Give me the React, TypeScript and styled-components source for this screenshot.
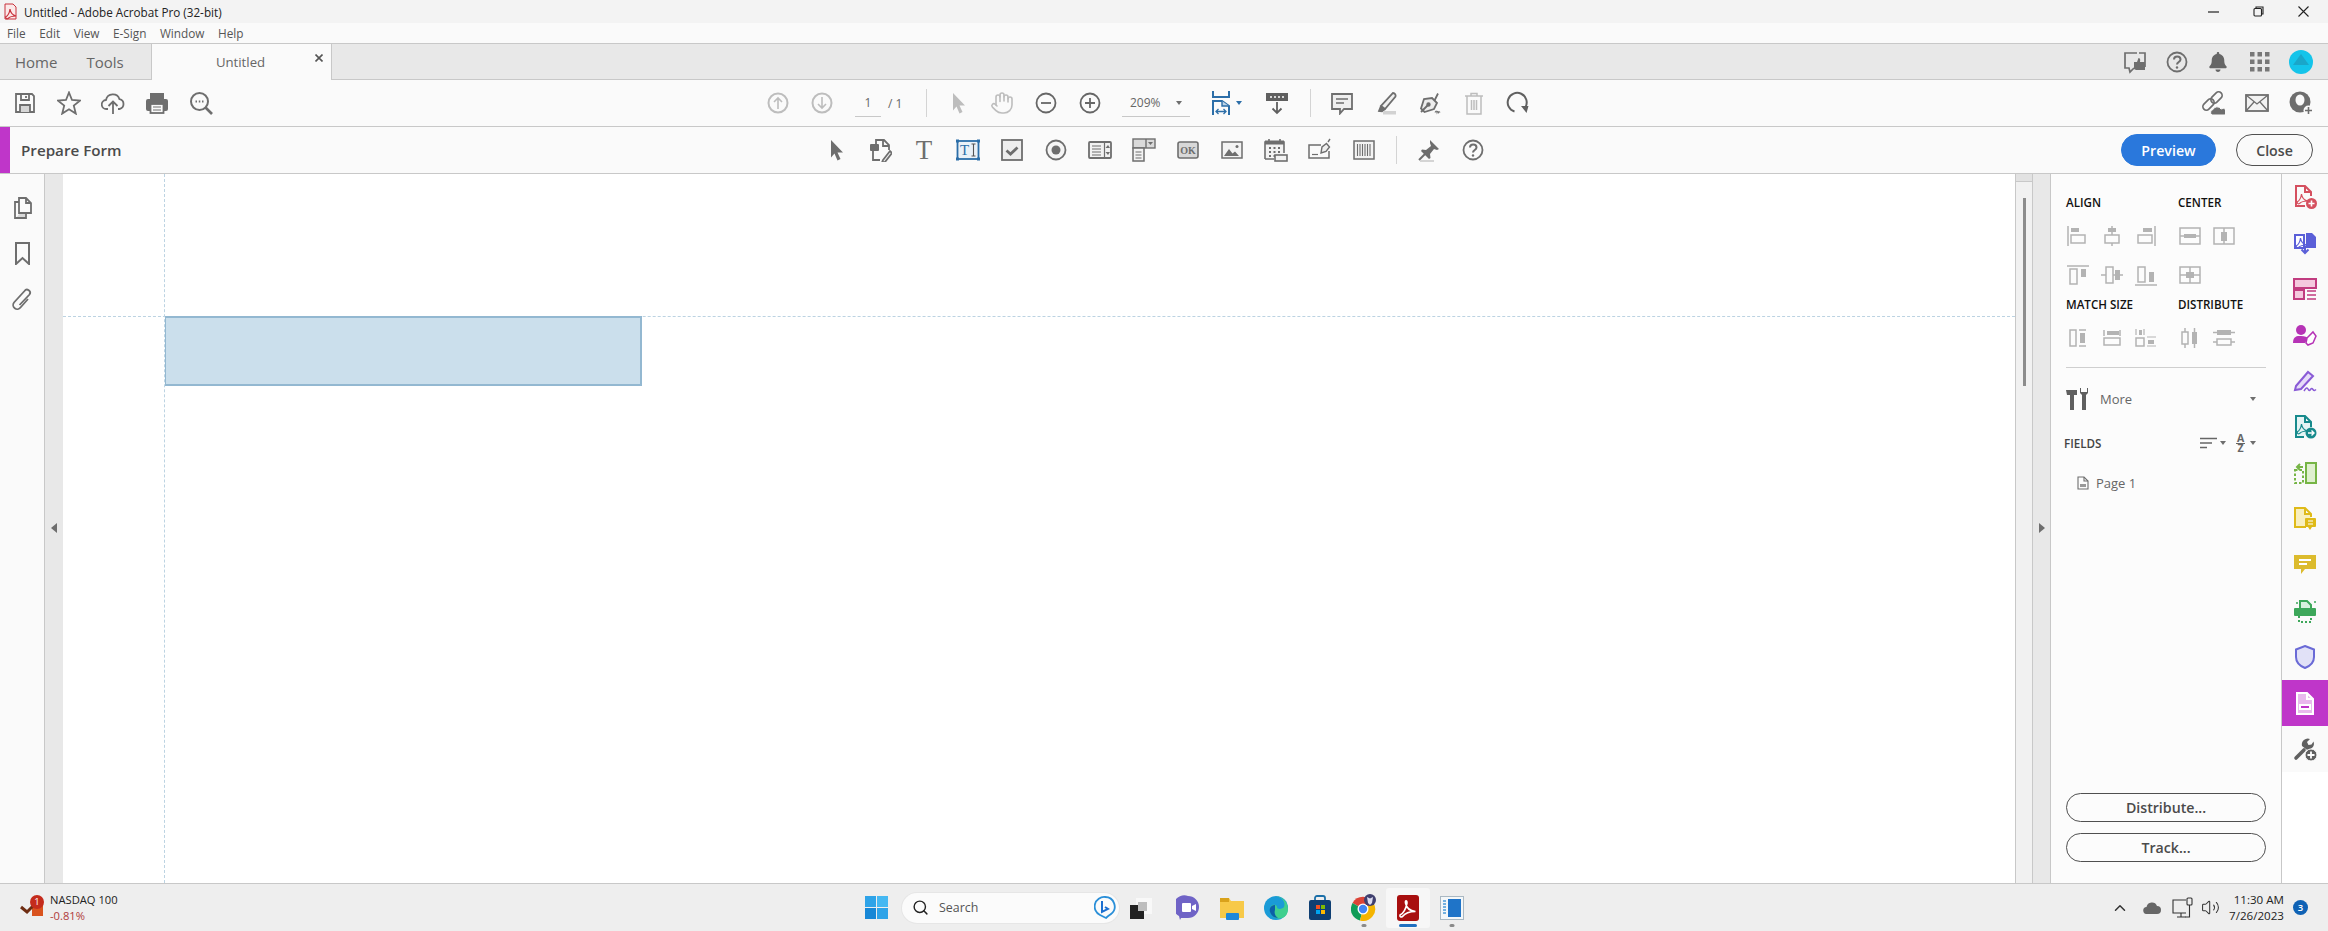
import React, { FC, ReactNode } from 'react';
import styled, { createGlobalStyle } from 'styled-components';
import { LuHand, LuSearch, LuChevronUp, LuVolume2 } from 'react-icons/lu';
import { FaBell } from 'react-icons/fa';

const GlobalStyle = createGlobalStyle`
  html, body, #root { margin: 0; height: 100%; }
  body { overflow: hidden; background: #fff; font-family: "Open Sans", "Noto Sans", sans-serif; color: #444; }
  * { box-sizing: border-box; }
`;

const Shell = styled.div`
  display: flex;
  flex-direction: column;
  width: 2328px;
  height: 931px;
`;

/* ---------- window chrome ---------- */
const TitleBar = styled.div`
  display: flex;
  align-items: center;
  height: 23px;
  background: #f3f3f3;
  padding-left: 4px;
  font-size: 11.7px;
  color: #222;
`;
const TitleText = styled.span`
  margin-left: 7px;
`;
const WinControls = styled.div`
  display: flex;
  margin-left: auto;
  margin-right: 2px;
`;
const WinControl = styled.div`
  display: flex;
  justify-content: center;
  align-items: center;
  width: 45px;
  height: 20px;
`;
const MenuBar = styled.div`
  display: flex;
  align-items: center;
  height: 21px;
  padding: 0 0 1px 7px;
  gap: 13.5px;
  background: #fafafa;
  border-bottom: 1px solid #c8c8c8;
  font-size: 11.8px;
  color: #555;
`;
const TabBar = styled.div`
  display: flex;
  height: 36px;
  background: #e8e8e8;
  border-bottom: 1px solid #c8c8c8;
`;
const NavTabs = styled.div`
  display: flex;
  align-items: center;
  width: 151px;
  padding-left: 15px;
  gap: 29px;
  font-size: 15px;
  color: #666;
`;
const DocTab = styled.div`
  position: relative;
  display: flex;
  justify-content: center;
  align-items: center;
  width: 181px;
  height: 36px;
  padding-right: 2px;
  background: #fafafa;
  border-left: 1px solid #c8c8c8;
  border-right: 1px solid #c8c8c8;
  font-size: 13.2px;
  color: #666;
`;
const TabClose = styled.span`
  position: absolute;
  right: 8px;
  top: 10px;
  display: flex;
`;
const TabIcons = styled.div`
  display: flex;
  align-items: center;
  margin-left: auto;
  padding-right: 6px;
`;
const Slot = styled.div<{ $w?: number; $end?: boolean }>`
  display: flex;
  flex: 0 0 auto;
  justify-content: ${(p) => (p.$end ? 'flex-end' : 'center')};
  align-items: center;
  width: ${(p) => p.$w ?? 44}px;
  height: 100%;
`;
const Toolbar = styled.div`
  display: flex;
  align-items: center;
  height: 47px;
  background: #fafafa;
  border-bottom: 1px solid #c8c8c8;
`;
const ToolGroup = styled.div<{ $ml?: number; $pl?: number; $pr?: number; $push?: boolean }>`
  display: flex;
  align-items: center;
  height: 100%;
  margin-left: ${(p) => (p.$push ? 'auto' : `${p.$ml ?? 0}px`)};
  padding-left: ${(p) => p.$pl ?? 0}px;
  padding-right: ${(p) => p.$pr ?? 0}px;
`;
const PageBox = styled.div`
  display: flex;
  justify-content: center;
  align-items: center;
  width: 26px;
  height: 28px;
  margin: 0 7px 0 11px;
  border-bottom: 1px solid #c8c8c8;
  font-size: 12px;
  color: #666;
`;
const PageTotal = styled.span`
  width: 38px;
  font-size: 12px;
  color: #666;
`;
const Sep = styled.div<{ $mr?: number; $ml?: number }>`
  width: 1px;
  height: 28px;
  margin-left: ${(p) => p.$ml ?? 0}px;
  margin-right: ${(p) => p.$mr ?? 0}px;
  background: #d4d4d4;
`;
const ZoomBox = styled.div`
  display: flex;
  align-items: center;
  justify-content: space-between;
  width: 68px;
  height: 28px;
  margin-left: 10px;
  padding: 0 8px;
  border-bottom: 1px solid #c8c8c8;
  font-size: 12px;
  color: #666;
`;
const Caret = styled.span<{ $c?: string; $ml?: number }>`
  display: inline-block;
  flex: 0 0 auto;
  width: 0;
  height: 0;
  margin-left: ${(p) => p.$ml ?? 0}px;
  border-left: 3.5px solid transparent;
  border-right: 3.5px solid transparent;
  border-top: 4px solid ${(p) => p.$c ?? '#6e6e6e'};
`;
const FormAccent = styled.div`
  width: 10px;
  height: 100%;
  background: #bf36c9;
`;
const FormTitle = styled.div`
  flex: 0 0 804px;
  padding-left: 11px;
  font-size: 15.2px;
  font-weight: 600;
  color: #4b4b4b;
`;
const FormActions = styled.div`
  display: flex;
  gap: 20px;
  margin-left: auto;
  padding-right: 15px;
`;
const PillButton = styled.div<{ $primary?: boolean; $w: number; $h?: number }>`
  display: flex;
  justify-content: center;
  align-items: center;
  width: ${(p) => p.$w}px;
  height: ${(p) => p.$h ?? 32}px;
  border-radius: 17px;
  border: 1px solid ${(p) => (p.$primary ? '#2a78dc' : '#505050')};
  background: ${(p) => (p.$primary ? '#2a78dc' : 'transparent')};
  color: ${(p) => (p.$primary ? '#fff' : '#4b4b4b')};
  font-size: 14.2px;
  font-weight: 600;
`;

/* ---------- workspace ---------- */
const Workspace = styled.div`
  display: flex;
  flex: 1;
  min-height: 0;
`;
const LeftRail = styled.div`
  display: flex;
  flex-direction: column;
  align-items: center;
  width: 45px;
  padding: 21px 1px 0 0;
  gap: 22px;
  background: #fafafa;
  border-right: 1px solid #c8c8c8;
`;
const Gutter = styled.div<{ $border?: boolean }>`
  display: flex;
  justify-content: center;
  align-items: center;
  width: 18px;
  padding-bottom: 1px;
  background: #e8e8e8;
  border-right: ${(p) => (p.$border ? '1px solid #c8c8c8' : 'none')};
`;
const SideArrow = styled.span<{ $left?: boolean }>`
  width: 0;
  height: 0;
  border-top: 5px solid transparent;
  border-bottom: 5px solid transparent;
  ${(p) => (p.$left ? 'border-right: 6px solid #6e6e6e;' : 'border-left: 6px solid #6e6e6e;')}
`;
const PageCanvas = styled.div`
  position: relative;
  flex: 1;
  background: #fff;
  overflow: hidden;
`;
const GuideV = styled.div`
  position: absolute;
  left: 101px;
  top: 0;
  bottom: 0;
  border-left: 1px dashed #bcd3e2;
`;
const GuideH = styled.div`
  position: absolute;
  left: 0;
  right: 0;
  top: 142px;
  border-top: 1px dashed #bcd3e2;
`;
const TextField = styled.div`
  position: absolute;
  left: 102px;
  top: 142px;
  width: 477px;
  height: 70px;
  background: #cbdfec;
  border: 2px solid #93b8d1;
  border-left-width: 1px;
`;
const ScrollTrack = styled.div`
  display: flex;
  flex-direction: column;
  align-items: center;
  width: 18px;
  background: #f1f1f1;
  border-left: 1px solid #c8c8c8;
  border-right: 1px solid #c8c8c8;
`;
const ScrollCap = styled.div`
  width: 100%;
  height: 8px;
  background: #e2e2e2;
  border-bottom: 1px solid #c8c8c8;
`;
const ScrollThumb = styled.div`
  width: 3px;
  height: 188px;
  margin-top: 16px;
  background: #8c8c8c;
`;
const RightPane = styled.div`
  display: flex;
  flex-direction: column;
  width: 231px;
  padding: 19px 15px 21px 10px;
  background: #fcfcfc;
  border-right: 1px solid #c8c8c8;
`;
const AlignGrid = styled.div`
  display: grid;
  grid-template-columns: 34px 34px 34px 10px 34px 34px;
  grid-template-rows: 20px 48px 30px 28px 40px;
  justify-items: center;
  align-items: center;
`;
const GroupLabel = styled.div<{ $col: number; $row: number }>`
  grid-column: ${(p) => p.$col} / span 3;
  grid-row: ${(p) => p.$row};
  justify-self: start;
  margin-top: -2px;
  margin-left: ${(p) => (p.$col === 1 ? 5 : 15)}px;
  font-size: 11.6px;
  font-weight: 600;
  white-space: nowrap;
  color: #111;
`;
const AlignCell = styled.div<{ $col: number; $row: number }>`
  display: flex;
  grid-column: ${(p) => p.$col};
  grid-row: ${(p) => p.$row};
`;
const PaneDivider = styled.div`
  height: 1px;
  margin: 8px 0 0 5px;
  background: #cfcfcf;
`;
const MoreRow = styled.div`
  display: flex;
  align-items: center;
  height: 62px;
  padding: 0 10px 0 5px;
  font-size: 13px;
  color: #666;
`;
const MoreLabel = styled.span`
  flex: 1;
  margin-left: 10px;
`;
const FieldsRow = styled.div`
  display: flex;
  align-items: center;
  height: 26px;
  padding: 0 10px 0 3px;
  font-size: 11.6px;
  font-weight: 600;
  color: #444;
`;
const SortControls = styled.div`
  display: flex;
  align-items: center;
  gap: 3px;
  margin-left: auto;
`;
const PageRow = styled.div`
  display: flex;
  align-items: center;
  gap: 7px;
  height: 54px;
  padding-left: 16px;
  font-size: 13px;
  color: #666;
`;
const PaneButtons = styled.div`
  display: flex;
  flex-direction: column;
  gap: 11px;
  margin-top: auto;
  padding-left: 5px;
`;
const ToolRail = styled.div`
  display: flex;
  flex-direction: column;
  width: 46px;
  background: #fff;
`;
const RailItem = styled.div<{ $active?: boolean }>`
  display: flex;
  flex: 0 0 46px;
  justify-content: center;
  align-items: center;
  background: ${(p) => (p.$active ? '#bf36c9' : '#fafafa')};
`;

/* ---------- taskbar ---------- */
const Taskbar = styled.div`
  display: flex;
  align-items: center;
  height: 48px;
  background: #eeeeee;
  border-top: 1px solid #c8c8c8;
`;
const Widget = styled.div`
  display: flex;
  align-items: center;
  flex: 0 0 865px;
  padding-left: 20px;
  gap: 6px;
`;
const WidgetIcon = styled.div`
  position: relative;
  display: flex;
`;
const WidgetBadge = styled.span`
  position: absolute;
  left: 10px;
  top: -3px;
  display: flex;
  justify-content: center;
  align-items: center;
  width: 14px;
  height: 14px;
  border-radius: 50%;
  background: #c42b1c;
  color: #fff;
  font-size: 9.5px;
`;
const WidgetText = styled.div`
  display: flex;
  flex-direction: column;
  font-size: 11.2px;
  line-height: 16px;
  color: #222;
`;
const WidgetDelta = styled.span`
  color: #b03a3a;
`;
const SearchPill = styled.div`
  display: flex;
  align-items: center;
  width: 217px;
  height: 30px;
  margin-left: 14px;
  padding: 0 3px 0 10px;
  gap: 10px;
  border-radius: 15px;
  background: #fbfbfb;
  box-shadow: 0 0 0 1px #e6e6e6;
  font-size: 12.4px;
  color: #555;
`;
const SearchEnd = styled.span`
  display: flex;
  margin-left: auto;
`;
const TaskItem = styled.div<{ $active?: boolean; $dot?: boolean; $mr?: number }>`
  position: relative;
  display: flex;
  flex: 0 0 44px;
  justify-content: center;
  align-items: center;
  height: 40px;
  margin-right: ${(p) => p.$mr ?? 0}px;
  border-radius: 3px;
  background: ${(p) => (p.$active ? '#f7f7f7' : 'transparent')};
  &::after {
    content: '';
    display: ${(p) => (p.$active || p.$dot ? 'block' : 'none')};
    position: absolute;
    bottom: 1px;
    left: 50%;
    transform: translateX(-50%);
    width: ${(p) => (p.$active ? 18 : 5)}px;
    height: 3px;
    border-radius: 2px;
    background: ${(p) => (p.$active ? '#1f6fc0' : '#8a8a8a')};
  }
`;
const Tray = styled.div`
  display: flex;
  align-items: center;
  margin-left: auto;
  padding-right: 20px;
`;
const TrayIcon = styled.span<{ $w: number }>`
  display: flex;
  justify-content: center;
  width: ${(p) => p.$w}px;
`;
const Clock = styled.div`
  display: flex;
  flex-direction: column;
  align-items: flex-end;
  margin-left: 9px;
  font-size: 11.6px;
  line-height: 16px;
  color: #222;
`;
const NotifyBadge = styled.span`
  display: flex;
  justify-content: center;
  align-items: center;
  width: 15px;
  height: 15px;
  margin-left: 9px;
  border-radius: 50%;
  background: #0f62b5;
  color: #fff;
  font-size: 9.5px;
  font-weight: 600;
`;

/* ---------- drawings ---------- */
const G = '#6e6e6e';
const L = '#bdbdbd';
const Svg: FC<{ s?: number; w?: number; h?: number; c?: string; sw?: number; children: ReactNode }> = ({
  s = 24, w, h, c = G, sw = 1.8, children,
}) => (
  <svg width={w ?? s} height={h ?? s} viewBox={`0 0 ${w ?? s} ${h ?? s}`} fill="none" stroke={c} strokeWidth={sw}>
    {children}
  </svg>
);

const PdfMark: FC<{ c: string; x?: number; y?: number }> = ({ c, x = 0, y = 0 }) => (
  <path
    transform={`translate(${x} ${y})`}
    d="M0 9c2-1 4-4 4.5-8 .5 4 2.5 6 6 7-3 0-6 .5-8 2.5-1 .5-2 .5-2.5-1.5z"
    stroke={c}
    strokeWidth={1.2}
    fill="none"
  />
);

const SaveIcon = () => (
  <Svg>
    <path d="M3 3h16l2 2v16H3z" />
    <path d="M8 3v6h8V3M13 5v2" />
    <path d="M7 21v-7h10v7" fill="#d6d6d6" />
  </Svg>
);
const StarIcon = () => (
  <Svg>
    <path d="M12 1.5l3 7.5 8 .6-6.2 5 2 8L12 18.3 5.2 22.6l2-8L1 9.6l8-.6z" />
  </Svg>
);
const CloudUpIcon = () => (
  <Svg>
    <path d="M7 18H5.5A4.5 4.5 0 0 1 5 9a7 7 0 0 1 13.5-.8A5 5 0 0 1 18.5 18H17" />
    <path d="M12 23V11M7.5 15L12 10.5 16.5 15" />
  </Svg>
);
const PrintIcon = () => (
  <Svg>
    <rect x="5" y="2" width="14" height="6" fill={G} stroke="none" />
    <rect x="1" y="8" width="22" height="12" rx="2" fill={G} stroke="none" />
    <rect x="5.5" y="13" width="13" height="9" fill="#fafafa" stroke={G} />
    <path d="M8 16h8M8 19h8" strokeWidth={1.2} />
  </Svg>
);
const FindIcon = () => (
  <Svg>
    <circle cx="10.5" cy="10.5" r="8.5" strokeWidth={2} />
    <path d="M16.5 16.5L23 23" strokeWidth={2.6} />
    <path d="M6.5 10.5h1.5M9.8 10.5h1.5M13 10.5h1.5" strokeWidth={1.8} />
  </Svg>
);
const UpCircle = ({ down = false }: { down?: boolean }) => (
  <Svg c={L}>
    <circle cx="12" cy="12" r="9.5" strokeWidth={2} />
    <path d={down ? 'M12 6v11M8 13l4 4 4-4' : 'M12 18V7M8 11l4-4 4 4'} strokeWidth={1.6} />
  </Svg>
);
const PointerIcon = ({ c = G }: { c?: string }) => (
  <Svg c={c}>
    <path d="M7 2l12 12.5h-5.5l3 6.5-3 1.5-3-7-3.5 4z" fill={c} stroke="none" />
  </Svg>
);
const ZoomBtn = ({ plus = false }: { plus?: boolean }) => (
  <Svg c="#666">
    <circle cx="12" cy="12" r="9.5" strokeWidth={1.8} />
    <path d={plus ? 'M7 12h10M12 7v10' : 'M7 12h10'} strokeWidth={1.8} />
  </Svg>
);
const FitWidth = () => (
  <Svg c="#2c6ea8" w={24} h={26}>
    <path d="M4 1v6h16V1" strokeWidth={2} />
    <path d="M4 25V11h9l7 5v9" strokeWidth={2} />
    <path d="M13 11v5h7" strokeWidth={1.4} fill="#bcd4e8" />
    <path d="M7 21.5h10M9.5 19L7 21.5 9.5 24M14.5 19l2.5 2.5-2.5 2.5" strokeWidth={1.3} />
  </Svg>
);
const RulerDown = () => (
  <Svg c="#5f5f5f">
    <rect x="1" y="2" width="22" height="8" fill="#5f5f5f" stroke="none" />
    <path d="M5 6h2M9 6h2M13 6h2M17 6h2" stroke="#fff" strokeWidth={1.6} />
    <path d="M12 11v11M7.5 17.5L12 22l4.5-4.5" strokeWidth={1.8} />
  </Svg>
);
const CommentIcon = () => (
  <Svg>
    <path d="M2 3h20v15h-8l-4 4.5V18H2z" fill="#eeeeee" />
    <path d="M6 8h12M6 12h8" strokeWidth={1.5} />
  </Svg>
);
const HighlightIcon = () => (
  <Svg>
    <path d="M19 2c2 0 3 2 2.5 3.5L11 18l-4-3z" fill="#f0f0f0" />
    <path d="M7 15l-2 5 3 .3 3-2.3" fill={G} />
    <rect x="9" y="20" width="13" height="3.5" fill="#d2d2d2" stroke="none" />
  </Svg>
);
const PenIcon = () => (
  <Svg>
    <path d="M14 7l5 5-3 6-9.5 3L3 17.5l3-9.5z" fill="#ededed" />
    <path d="M16.5 9.5L20 2.5M3 21l6.5-6.5" />
    <circle cx="10.5" cy="13.5" r="1.3" fill={G} />
    <path d="M17 21.5c1-2 1.5-2 2 0 .5-1.5 1-1.5 1.5 0 .5-1 1-1 1.5 0" strokeWidth={1.1} />
  </Svg>
);
const TrashIcon = () => (
  <Svg c={L}>
    <path d="M3 5h18M9 5V2.5h6V5M5 5v18h14V5M9.5 9v10M12 9v10M14.5 9v10" strokeWidth={1.5} />
  </Svg>
);
const RedoIcon = () => (
  <Svg c="#606060">
    <path d="M8.5 20.5a9.5 9.5 0 1 1 11-4.5" strokeWidth={2} />
    <path d="M15 15h7.5l-2 7z" fill="#606060" stroke="none" />
  </Svg>
);
const CloudLink = () => (
  <Svg>
    <rect x="1" y="10" width="13" height="7" rx="3.5" transform="rotate(-45 7.5 13.5)" strokeWidth={1.7} />
    <rect x="9" y="3" width="13" height="7" rx="3.5" transform="rotate(-45 15.5 6.5)" strokeWidth={1.7} />
    <path d="M11 24a3 3 0 0 1 1-5.5 4.5 4.5 0 0 1 8-.5A3.2 3.2 0 0 1 24 24z" fill={G} stroke="#fafafa" strokeWidth={1} />
  </Svg>
);
const MailIcon = () => (
  <Svg>
    <rect x="1" y="4" width="22" height="16" fill="#f2f2f2" />
    <path d="M1 4l11 9 11-9M1 20l8-9M23 20l-8-9" strokeWidth={1.3} />
  </Svg>
);
const PersonPlus = () => (
  <Svg>
    <circle cx="11" cy="11" r="10.5" fill={G} stroke="none" />
    <ellipse cx="11" cy="9" rx="4.5" ry="5.5" fill="#fafafa" stroke="none" />
    <circle cx="19.5" cy="19.5" r="5" fill="#fafafa" stroke="none" />
    <path d="M19.5 16v7M16 19.5h7" strokeWidth={1.6} />
  </Svg>
);
const FeedbackIcon = () => (
  <Svg>
    <path d="M14 3H2v15h4l1 4 4-4" strokeWidth={1.7} />
    <path d="M16 3h6v14" strokeWidth={1.7} />
    <path d="M11 12h3l1.5-4c1.5 0 2 1 1.5 4h5v8h-9l-2-1z" fill={G} stroke="none" />
  </Svg>
);
const HelpIcon = () => (
  <Svg>
    <circle cx="12" cy="12" r="9.5" />
    <path d="M9 9.5c0-4 6.5-4 6.5 0 0 2.5-3.5 2.5-3.5 5" strokeWidth={2} />
    <circle cx="12" cy="17.5" r="1.2" fill={G} stroke="none" />
  </Svg>
);
const AppGrid = () => (
  <svg width="20" height="20" viewBox="0 0 20 20" fill="#777">
    {[0, 7.5, 15].map((y) => [0, 7.5, 15].map((x) => <rect key={`${x}-${y}`} x={x} y={y} width="4.5" height="4.5" />))}
  </svg>
);
const Avatar = () => (
  <svg width="24" height="24" viewBox="0 0 24 24">
    <circle cx="12" cy="12" r="12" fill="#14c4ea" />
    <path d="M4 15l8-11 8 11z" fill="#1aa6c9" />
  </svg>
);

/* form tools */
const FieldGlyph = styled.text`
  font-family: "Liberation Serif", serif;
  stroke: none;
`;
const FormIcon = () => (
  <Svg>
    <path d="M8 6V2h8l5 5v5M15 2v6h6M5 13v9h7" />
    <rect x="2" y="6" width="9" height="7" rx="1" fill={G} stroke="none" />
    <path d="M15 22l7-9 2 2-7 9-3 .5z" fill="#eeeeee" />
  </Svg>
);
const TextTool = () => (
  <Svg w={24} h={32}>
    <FieldGlyph x="12" y="25" fontSize="27" textAnchor="middle" fill={G}>T</FieldGlyph>
  </Svg>
);
const FieldTool = () => (
  <Svg c="#2c6ea8" w={24} h={22}>
    <rect x="1.5" y="2" width="21" height="18" fill="#eaf1f7" strokeWidth={1.8} />
    <rect x="0" y="0.5" width="3" height="3" fill="#2c6ea8" stroke="none" />
    <rect x="21" y="0.5" width="3" height="3" fill="#2c6ea8" stroke="none" />
    <rect x="0" y="18.5" width="3" height="3" fill="#2c6ea8" stroke="none" />
    <rect x="21" y="18.5" width="3" height="3" fill="#2c6ea8" stroke="none" />
    <FieldGlyph x="4" y="16" fontSize="15" fill="#2c6ea8">T</FieldGlyph>
    <path d="M15.5 5h4M15.5 17h4M17.5 5v12" strokeWidth={1.1} stroke="#555" />
  </Svg>
);
const CheckTool = () => (
  <Svg w={22} h={22}>
    <rect x="1" y="1" width="20" height="20" fill="#eeeeee" />
    <path d="M5.5 11.5l4 3.5 7-6.5" strokeWidth={2.8} />
  </Svg>
);
const RadioTool = () => (
  <Svg w={22} h={22}>
    <circle cx="11" cy="11" r="9.5" fill="#f5f5f5" strokeWidth={1.8} />
    <circle cx="11" cy="11" r="4.5" fill={G} stroke="none" />
  </Svg>
);
const ListTool = () => (
  <Svg w={24} h={18}>
    <rect x="1" y="1" width="22" height="16" rx="1" fill="#f1f1f1" />
    <path d="M4 5h9M4 8h9M4 11h9M4 14h9M16.5 1v16" strokeWidth={1.2} />
    <path d="M17.5 7l2.5-3 2 3zM17.5 11l2.5 3 2-3z" fill={G} stroke="none" />
  </Svg>
);
const ComboTool = () => (
  <Svg w={24} h={24}>
    <rect x="1" y="1" width="22" height="9" fill="#d9d9d9" strokeWidth={1.4} />
    <path d="M14 1v9" strokeWidth={1.4} />
    <path d="M16 4h5l-2.5 3z" fill={G} stroke="none" />
    <rect x="1" y="10" width="11" height="13" fill="#f3f3f3" strokeWidth={1.5} />
    <path d="M3.5 14h6M3.5 17h6M3.5 20h6" strokeWidth={1.1} />
  </Svg>
);
const OkTool = () => (
  <Svg w={22} h={18}>
    <rect x="1" y="1" width="20" height="16" rx="2" fill="#d8d8d8" strokeWidth={1.6} />
    <FieldGlyph x="11" y="13" fontSize="10" fontWeight="700" textAnchor="middle" fill={G}>OK</FieldGlyph>
  </Svg>
);
const ImageTool = () => (
  <Svg w={22} h={18}>
    <rect x="1" y="1" width="20" height="16" fill="#f3f3f3" strokeWidth={1.5} />
    <path d="M3 15l5-7 3.5 4.5 2.5-2 4 4.5z" fill={G} stroke="none" />
    <circle cx="16" cy="5.5" r="1.5" fill={G} stroke="none" />
  </Svg>
);
const CalendarTool = () => (
  <Svg>
    <path d="M1 21V4h19v11M1 21h9" strokeWidth={1.6} fill="#f3f3f3" />
    <rect x="1" y="2.5" width="19" height="4" fill={G} stroke="none" />
    <path d="M5 1v3M16 1v3" strokeWidth={1.6} />
    <path d="M5 10h2M9.5 10h2M14 10h2M5 14h2M9.5 14h2M14 14h2M5 18h2M9.5 18h2" strokeWidth={2} />
    <rect x="11" y="17" width="12" height="6" fill="#f3f3f3" strokeWidth={1.6} />
  </Svg>
);
const SignTool = () => (
  <Svg>
    <path d="M13 7H1v13h20v-7" strokeWidth={1.5} />
    <path d="M4 16.5h6" strokeWidth={1.2} />
    <path d="M13 15l1-6 4.5-3.5 3 3.5-3.5 4.5z" fill="#eeeeee" strokeWidth={1.4} />
    <path d="M20 4l2-3" strokeWidth={1.4} />
  </Svg>
);
const BarcodeTool = () => (
  <Svg w={22} h={20}>
    <rect x="1" y="1" width="20" height="18" fill="#f3f3f3" strokeWidth={1.5} />
    <path d="M4.5 4v12M7 4v12M9.5 4v12M12 4v12M14.5 4v12M17 4v12" strokeWidth={1.1} />
  </Svg>
);
const PinIcon = () => (
  <Svg>
    <path d="M13 2l9 9-2 1-3-1-4 5 .5 4-1.5 1-8-8 1-1.5 4 .5 5-4-1-3z" fill={G} stroke="none" />
    <path d="M8 16l-6 6" strokeWidth={2} />
    <rect x="3" y="22" width="14" height="2" fill="#d4d4d4" stroke="none" />
  </Svg>
);

/* properties pane */
const A = '#b3b3b3';
const AlignIcon: FC<{ kind: string }> = ({ kind }) => {
  const parts: Record<string, ReactNode> = {
    alignL: (<><path d="M2 1v20" /><rect x="5" y="3" width="8" height="4" fill={A} stroke="none" /><rect x="5" y="10" width="14" height="8" /></>),
    alignC: (<><path d="M12 1v20" /><rect x="8" y="3" width="8" height="4" fill={A} stroke="none" /><rect x="5" y="10" width="14" height="8" fill="#fcfcfc" /></>),
    alignR: (<><path d="M21 1v20" /><rect x="9" y="3" width="9" height="4" fill={A} stroke="none" /><rect x="4" y="10" width="14" height="8" /></>),
    centerH: (<><rect x="2" y="3" width="20" height="16" /><rect x="6" y="9" width="12" height="4" fill={A} stroke="none" /><path d="M2 11h20" /></>),
    centerV: (<><rect x="2" y="3" width="20" height="16" /><rect x="9" y="7" width="6" height="9" fill={A} stroke="none" /><path d="M12 3v16" /></>),
    centerB: (<><rect x="2" y="3" width="20" height="16" /><rect x="8" y="8" width="8" height="6" fill={A} stroke="none" /><path d="M2 11h20M12 3v16" /></>),
    alignT: (<><path d="M1 2h22" /><rect x="4" y="5" width="7" height="15" /><rect x="15" y="5" width="5" height="8" fill={A} stroke="none" /></>),
    alignM: (<><path d="M1 11h22" /><rect x="6" y="3" width="7" height="16" fill="#fcfcfc" /><rect x="15" y="6" width="5" height="10" fill={A} stroke="none" /></>),
    alignB: (<><path d="M1 21h22" /><rect x="4" y="3" width="7" height="15" /><rect x="15" y="8" width="5" height="10" fill={A} stroke="none" /></>),
    matchW: (<><rect x="4" y="3" width="6" height="16" /><rect x="14" y="6" width="5" height="10" fill={A} stroke="none" /><path d="M13 3h7M13 19h7" /></>),
    matchH: (<><rect x="7" y="4" width="12" height="4" fill={A} stroke="none" /><rect x="4" y="11" width="16" height="7" /><path d="M4 3v6M20 3v6" /></>),
    matchB: (<><rect x="2" y="11" width="8" height="8" /><rect x="14" y="13" width="6" height="4" fill={A} stroke="none" /><rect x="5" y="3" width="3" height="5" fill={A} stroke="none" /><path d="M2 2v6M10 2v6M13 10h9M13 19h9" strokeWidth={1.2} /></>),
    distH: (<><rect x="4" y="5" width="6" height="12" /><rect x="14" y="5" width="5" height="12" fill={A} stroke="none" /><path d="M7 1v4M7 17v4M16.5 1v20" /></>),
    distV: (<><rect x="5" y="3" width="14" height="5" fill={A} stroke="none" /><rect x="5" y="12" width="14" height="6" /><path d="M1 5.5h22M1 15h4M19 15h4" /></>),
  };
  return <Svg c={A} sw={1.5}>{parts[kind]}</Svg>;
};
const ToolsIcon = () => (
  <Svg s={24} c="#5f5f5f" sw={2}>
    <path d="M0 3h11v5H8v15H4V8H1z" fill="#5f5f5f" stroke="none" />
    <path d="M14 1v5l2 2v15h4V8l2-2V1l-1 0v4h-6V1z" fill="#5f5f5f" stroke="none" />
  </Svg>
);
const SortIcon = () => (
  <Svg w={17} h={14} c="#666" sw={1.7}>
    <path d="M0 2.5h17M0 7h12M0 11.5h7" />
  </Svg>
);
const AzLabel = styled.div`
  display: flex;
  flex-direction: column;
  align-items: center;
  margin: 0 2px 0 7px;
  font-size: 10.5px;
  font-weight: 700;
  line-height: 9px;
  color: #666;
`;
const AzBar = styled.span`
  width: 9px;
  height: 1px;
  background: #666;
`;
const PageDoc = () => (
  <Svg w={12} h={14} sw={1.1}>
    <path d="M1 1h6l4 4v8H1z" />
    <path d="M7 1v4h4" />
    <rect x="3" y="8" width="6" height="3" fill="#999" stroke="none" />
  </Svg>
);

/* left rail */
const PagesIcon = () => (
  <Svg>
    <path d="M9 3h7l5 5v10H9zM16 3v5h5" />
    <path d="M9 7H5v16h11v-5" />
    <path d="M7 22h8v-3H9z" fill="#d9d9d9" stroke="none" />
  </Svg>
);
const BookmarkIcon = () => (
  <Svg>
    <path d="M6 2h13v21l-6.5-6L6 23z" strokeWidth={2} />
  </Svg>
);
const ClipIcon = () => (
  <Svg>
    <path d="M18 12l-7.5 8.5a4 4 0 0 1-6.5-5L14.5 4a3 3 0 0 1 5 3.5L9.5 18" strokeWidth={1.8} />
  </Svg>
);

/* right rail */
const R = (c: string, body: ReactNode) => <Svg c={c} sw={2}>{body}</Svg>;
const railIcons: ReactNode[] = [
  R('#d5505f', (<><path d="M12 21H3V1h9l6 6v4M12 1v6h6" /><PdfMark c="#d5505f" x={4} y={8} /><circle cx="18.5" cy="18.5" r="5.5" fill="#d5505f" stroke="none" /><path d="M18.5 15.5v6M15.5 18.5h6" stroke="#fff" strokeWidth={1.6} /></>)),
  R('#5a5fd8', (<><path d="M11 17H2V4h9z" fill="#fff" /><path d="M13 2h6l4 4v11H13z" fill="#5a5fd8" stroke="none" /><path d="M12 15v7M8.5 18.5L12 22l3.5-3.5" strokeWidth={2} stroke="#5a5fd8" /><PdfMark c="#5a5fd8" x={3} y={6} /></>)),
  R('#c13c80', (<><rect x="1" y="2" width="22" height="9" fill="#f4c9de" /><rect x="1" y="13" width="10" height="9" fill="#f4c9de" /><path d="M14 14h9M14 18h9M14 22h9" strokeWidth={1.5} /></>)),
  R('#b633b6', (<><circle cx="8" cy="7" r="5" fill="#b633b6" stroke="none" /><path d="M0 20c0-7 4-7 8-7s6 1 7 2l-3 5z" fill="#b633b6" stroke="none" /><path d="M14 15l6-6 3 4-3 7-5 2-2-2z" fill="#fff" strokeWidth={1.5} /></>)),
  R('#8a5bd6', (<><path d="M3 17L15 3l5 4L8 20l-6 1z" fill="#e6dcf8" /><path d="M11 22c2-3 3-4 4-2s1.5 2 2.5.5 1.5-1.5 2.5 0 2 1 3 0" strokeWidth={1.5} /></>)),
  R('#178a8c', (<><path d="M11 22H3V1h9l6 6v5M12 1v6h6" fill="#e5f4f4" /><PdfMark c="#178a8c" x={4} y={8} /><circle cx="18" cy="18" r="5.5" fill="#178a8c" stroke="none" /><path d="M15 18h6M18.5 15.5L21 18l-2.5 2.5" stroke="#fff" strokeWidth={1.4} /></>)),
  R('#76b546', (<><rect x="13" y="2" width="10" height="20" fill="#dff0cf" /><path d="M2 9h8v13H2z" strokeDasharray="2.5 2" /><path d="M10 6H4M7 3L4 6l3 3" /></>)),
  R('#dfba18', (<><path d="M13 20H2V1h10l6 6v3M12 1v6h6" fill="#f8efbe" /><rect x="12" y="11" width="11" height="9" rx="1" fill="#dfba18" stroke="none" /><path d="M15 14h5M15 17h5" stroke="#fff" strokeWidth={1.2} /><path d="M15 20l2 3 2-3z" fill="#dfba18" stroke="none" /></>)),
  R('#dcbb2d', (<><path d="M1 2h22v14H12l-4 5v-5H1z" fill="#dcbb2d" stroke="none" /><path d="M6 7h12M6 11h8" stroke="#fff" strokeWidth={1.8} /></>)),
  R('#3da75a', (<><path d="M7 10V2h7l4 4v4" fill="#d8f0dd" /><rect x="1" y="9" width="22" height="8" rx="1" fill="#3da75a" stroke="none" /><path d="M6 17v6h12v-6" strokeDasharray="2 2" /><path d="M3 4h2M21 3h2" strokeWidth={1.5} /></>)),
  R('#6a6ad6', (<><path d="M12 1l9 3.5V12c0 6-4 9-9 11-5-2-9-5-9-11V4.5z" fill="#e1e1f7" /></>)),
  R('#ffffff', (<><path d="M4 2h10l6 6v15H4z" fill="#e9b9ed" /><path d="M14 2v6h6" /><rect x="7" y="14" width="10" height="4" fill="#bf36c9" /></>)),
  R('#606060', (<><path d="M3 21l8-8" strokeWidth={3.6} strokeLinecap="round" /><path d="M9 9a6 6 0 0 1 8-7l-3 3 1.5 3 3-.5 2-3a6 6 0 0 1-7 8z" fill="#606060" stroke="none" /><circle cx="18" cy="18" r="6" fill="#606060" stroke="#fafafa" strokeWidth={1} /><path d="M18 14.5v7M14.5 18h7" stroke="#fff" strokeWidth={1.8} /></>)),
];

/* taskbar apps */
const WinLogo = () => (
  <svg width="23" height="23" viewBox="0 0 23 23" style={{ display: 'block' }}>
    <rect width="11" height="11" fill="#2ea3e8" /><rect x="12" width="11" height="11" fill="#45b8f2" />
    <rect y="12" width="11" height="11" fill="#1787d6" /><rect x="12" y="12" width="11" height="11" fill="#2ea3e8" />
  </svg>
);
const BingIcon = () => (
  <svg width="22" height="24" viewBox="0 0 22 24" fill="none">
    <path d="M11 1a9.5 9.5 0 0 1 6 17c-2 1.5-3 2-5 4l-6-3A9.5 9.5 0 0 1 11 1z" stroke="#2a8fd8" strokeWidth={1.8} />
    <path d="M8 5v11l6-3-3-2" stroke="#1c6fd0" strokeWidth={2} />
  </svg>
);
const TaskViewIcon = () => (
  <svg width="22" height="22" viewBox="0 0 22 22">
    <rect x="6" y="1" width="16" height="16" fill="#f8f8f8" />
    <rect x="8" y="5" width="9" height="9" fill="#bdbdbd" />
    <rect x="0" y="8" width="14" height="14" fill="#222" />
    <rect x="8" y="8" width="6" height="6" fill="#bdbdbd" />
  </svg>
);
const ChatIcon = () => (
  <svg width="24" height="26" viewBox="0 0 24 26">
    <path d="M12 1a11 11 0 0 1 0 22H5l-1 2-1-4A11 11 0 0 1 12 1z" fill="#6f63c6" />
    <rect x="6" y="8" width="9" height="9" rx="1" fill="#fff" />
    <path d="M16 11l4-2v7l-4-2z" fill="#fff" />
  </svg>
);
const FolderIcon = () => (
  <svg width="24" height="24" viewBox="0 0 24 24">
    <path d="M0 2h9l2 3h13v17H0z" fill="#f7c948" />
    <rect y="2" width="9" height="4" fill="#d9a21b" />
    <rect x="6" y="17" width="13" height="7" rx="1" fill="#1e88d9" />
  </svg>
);
const EdgeIcon = () => (
  <svg width="24" height="24" viewBox="0 0 24 24">
    <circle cx="12" cy="12" r="12" fill="#1a9bd7" />
    <path d="M24 13C24 5 17 0 11 0 18 1 22 6 20 11c-1 2-7 3-7 0 0-3-7-4-7 3 0 6 6 10 12 8 4-1 6-5 6-9z" fill="#3fcf8e" />
    <path d="M11 9c-4 0-6 3-5 7 1 3 4 6 8 6-3-2-4-5-3-8z" fill="#0b5fa8" />
  </svg>
);
const StoreIcon = () => (
  <svg width="24" height="26" viewBox="0 0 24 26" fill="none">
    <path d="M7 6V3a2 2 0 0 1 2-2h6a2 2 0 0 1 2 2v3" stroke="#1b6fa8" strokeWidth={1.8} />
    <rect x="1" y="5" width="22" height="20" rx="2" fill="#0f3f73" />
    <rect x="8" y="10" width="4" height="4" fill="#f25022" /><rect x="13" y="10" width="4" height="4" fill="#7fba00" />
    <rect x="8" y="15" width="4" height="4" fill="#00a4ef" /><rect x="13" y="15" width="4" height="4" fill="#ffb900" />
  </svg>
);
const ChromeIcon = () => (
  <svg width="26" height="28" viewBox="0 0 26 28">
    <g transform="translate(0 3)">
      <path d="M12 12L1.5 6A12 12 0 0 1 22.5 6z" fill="#db4437" />
      <path d="M12 12L1.5 6A12 12 0 0 0 9 23.6z" fill="#0f9d58" />
      <path d="M12 12L22.5 6A12 12 0 0 1 9 23.6z" fill="#f4b400" />
      <circle cx="12" cy="12" r="5.5" fill="#fff" />
      <circle cx="12" cy="12" r="4.2" fill="#4285f4" />
    </g>
    <circle cx="19" cy="6" r="6" fill="#3f3f6e" />
    <path d="M16 3l3 1.5L22 3l-1 6-2 2-2-2z" fill="#dcdcf0" />
  </svg>
);
const AcrobatApp = () => (
  <svg width="22" height="26" viewBox="0 0 22 26" fill="none">
    <rect width="22" height="26" rx="3" fill="#a80f0f" />
    <path d="M3 20c3-1 6-6 7-12 0-3-2-3-1.5 0 1 5 4.5 8 10 8.5-5 0-10 1-13 5-1.5 1-3 .5-2.5-1.5z" stroke="#fff" strokeWidth={1.6} />
  </svg>
);
const DocApp = () => (
  <svg width="24" height="24" viewBox="0 0 24 24">
    <rect x=".5" y=".5" width="23" height="23" fill="#f4f7f9" stroke="#aab8c2" />
    <rect x="8" y="3" width="13" height="18" fill="#1f74c8" />
    <path d="M3 5h3M3 8h3M3 11h3M3 14h3M3 17h3" stroke="#4a9ad8" strokeWidth={1.5} />
  </svg>
);
const TrayCloud = () => (
  <svg width="18" height="12" viewBox="0 0 18 12">
    <path d="M4 12a3.5 3.5 0 0 1-.5-7A5.5 5.5 0 0 1 14 4a4 4 0 0 1 0 8z" fill="#666" />
  </svg>
);
const TrayNet = () => (
  <svg width="24" height="22" viewBox="0 0 24 22" fill="none" stroke="#333" strokeWidth={1.1}>
    <path d="M14 3H1v13h13M5 20h9M9 16v4" />
    <rect x="15" y="1" width="5" height="7" rx="1" />
    <path d="M17.5 8v12h-4" />
  </svg>
);
const AcrobatDocMark = () => (
  <svg width="13" height="17" viewBox="0 0 13 17" fill="none">
    <path d="M1 1h8l3 3v12H1z" fill="#fbe9e9" stroke="#c8323c" />
    <PdfMark c="#c8323c" x={1.5} y={5} />
  </svg>
);
const WidgetCheck = () => (
  <svg width="24" height="20" viewBox="0 0 24 20">
    <rect x="12" y="6" width="11" height="12" fill="#d9531e" />
    <path d="M1 9l6 5 9-9" fill="none" stroke="#6e2d12" strokeWidth={3} />
  </svg>
);

const alignCells: [string, number, number][] = [
  ['alignL', 1, 2], ['alignC', 2, 2], ['alignR', 3, 2], ['centerH', 5, 2], ['centerV', 6, 2],
  ['alignT', 1, 3], ['alignM', 2, 3], ['alignB', 3, 3], ['centerB', 5, 3],
  ['matchW', 1, 5], ['matchH', 2, 5], ['matchB', 3, 5], ['distH', 5, 5], ['distV', 6, 5],
];

const App: FC = () => (
  <Shell>
    <GlobalStyle />
    <TitleBar>
      <AcrobatDocMark />
      <TitleText>Untitled - Adobe Acrobat Pro (32-bit)</TitleText>
      <WinControls>
        <WinControl><Svg w={11} h={2} c="#222" sw={1.2}><path d="M0 1h11" /></Svg></WinControl>
        <WinControl><Svg w={11} h={11} c="#222" sw={1.1}><path d="M3 2.5V1h7v7H8.5" /><rect x="1" y="2.5" width="7.5" height="7.5" rx="1" /></Svg></WinControl>
        <WinControl><Svg w={11} h={11} c="#222" sw={1.1}><path d="M.5.5l10 10M10.5.5l-10 10" /></Svg></WinControl>
      </WinControls>
    </TitleBar>
    <MenuBar>
      {['File', 'Edit', 'View', 'E-Sign', 'Window', 'Help'].map((m) => <span key={m}>{m}</span>)}
    </MenuBar>
    <TabBar>
      <NavTabs><span>Home</span><span>Tools</span></NavTabs>
      <DocTab>
        Untitled
        <TabClose><Svg w={8} h={8} c="#555" sw={1.6}><path d="M.5.5l7 7M7.5.5l-7 7" /></Svg></TabClose>
      </DocTab>
      <TabIcons>
        <Slot $w={41.5}><FeedbackIcon /></Slot>
        <Slot $w={41.5}><HelpIcon /></Slot>
        <Slot $w={41.5}><FaBell size={20} color="#666" /></Slot>
        <Slot $w={41.5}><AppGrid /></Slot>
        <Slot $w={41.5}><Avatar /></Slot>
      </TabIcons>
    </TabBar>
    <Toolbar>
      <ToolGroup $pl={3}>
        <Slot><SaveIcon /></Slot>
        <Slot><StarIcon /></Slot>
        <Slot><CloudUpIcon /></Slot>
        <Slot><PrintIcon /></Slot>
        <Slot><FindIcon /></Slot>
      </ToolGroup>
      <ToolGroup $ml={533}>
        <Slot><UpCircle /></Slot>
        <Slot><UpCircle down /></Slot>
        <PageBox>1</PageBox>
        <PageTotal>/ 1</PageTotal>
        <Sep $mr={9} />
        <Slot><PointerIcon c={L} /></Slot>
        <Slot><LuHand size={24} color={L} strokeWidth={1.6} /></Slot>
        <Slot><ZoomBtn /></Slot>
        <Slot><ZoomBtn plus /></Slot>
        <ZoomBox>209%<Caret /></ZoomBox>
        <Slot $w={43} $end><FitWidth /></Slot>
        <Caret $c="#2c6ea8" $ml={3} />
        <Slot $w={70}><RulerDown /></Slot>
        <Sep $ml={-2} $mr={9} />
        <Slot><CommentIcon /></Slot>
        <Slot><HighlightIcon /></Slot>
        <Slot><PenIcon /></Slot>
        <Slot><TrashIcon /></Slot>
        <Slot><RedoIcon /></Slot>
      </ToolGroup>
      <ToolGroup $push $pr={5}>
        <Slot><CloudLink /></Slot>
        <Slot><MailIcon /></Slot>
        <Slot><PersonPlus /></Slot>
      </ToolGroup>
    </Toolbar>
    <Toolbar>
      <FormAccent />
      <FormTitle>Prepare Form</FormTitle>
      <ToolGroup>
        <Slot><PointerIcon /></Slot>
        <Slot><FormIcon /></Slot>
        <Slot><TextTool /></Slot>
        <Slot><FieldTool /></Slot>
        <Slot><CheckTool /></Slot>
        <Slot><RadioTool /></Slot>
        <Slot><ListTool /></Slot>
        <Slot><ComboTool /></Slot>
        <Slot><OkTool /></Slot>
        <Slot><ImageTool /></Slot>
        <Slot><CalendarTool /></Slot>
        <Slot><SignTool /></Slot>
        <Slot><BarcodeTool /></Slot>
        <Sep $ml={10} $mr={10} />
        <Slot><PinIcon /></Slot>
        <Slot><HelpIcon /></Slot>
      </ToolGroup>
      <FormActions>
        <PillButton $primary $w={95}>Preview</PillButton>
        <PillButton $w={77}>Close</PillButton>
      </FormActions>
    </Toolbar>
    <Workspace>
      <LeftRail>
        <PagesIcon />
        <BookmarkIcon />
        <ClipIcon />
      </LeftRail>
      <Gutter><SideArrow $left /></Gutter>
      <PageCanvas>
        <GuideV />
        <GuideH />
        <TextField />
      </PageCanvas>
      <ScrollTrack>
        <ScrollCap />
        <ScrollThumb />
      </ScrollTrack>
      <Gutter $border><SideArrow /></Gutter>
      <RightPane>
        <AlignGrid>
          <GroupLabel $col={1} $row={1}>ALIGN</GroupLabel>
          <GroupLabel $col={4} $row={1}>CENTER</GroupLabel>
          <GroupLabel $col={1} $row={4}>MATCH SIZE</GroupLabel>
          <GroupLabel $col={4} $row={4}>DISTRIBUTE</GroupLabel>
          {alignCells.map(([kind, col, row]) => (
            <AlignCell key={kind} $col={col} $row={row}><AlignIcon kind={kind} /></AlignCell>
          ))}
        </AlignGrid>
        <PaneDivider />
        <MoreRow>
          <ToolsIcon />
          <MoreLabel>More</MoreLabel>
          <Caret />
        </MoreRow>
        <FieldsRow>
          FIELDS
          <SortControls>
            <SortIcon />
            <Caret />
            <AzLabel>A<AzBar />Z</AzLabel>
            <Caret />
          </SortControls>
        </FieldsRow>
        <PageRow><PageDoc />Page 1</PageRow>
        <PaneButtons>
          <PillButton $w={200} $h={29}>Distribute...</PillButton>
          <PillButton $w={200} $h={29}>Track...</PillButton>
        </PaneButtons>
      </RightPane>
      <ToolRail>
        {railIcons.map((icon, i) => (
          <RailItem key={i} $active={i === 11}>{icon}</RailItem>
        ))}
      </ToolRail>
    </Workspace>
    <Taskbar>
      <Widget>
        <WidgetIcon><WidgetCheck /><WidgetBadge>1</WidgetBadge></WidgetIcon>
        <WidgetText>
          <span>NASDAQ 100</span>
          <WidgetDelta>-0.81%</WidgetDelta>
        </WidgetText>
      </Widget>
      <WinLogo />
      <SearchPill>
        <LuSearch size={17} color="#222" />
        Search
        <SearchEnd><BingIcon /></SearchEnd>
      </SearchPill>
      <TaskItem $mr={3}><TaskViewIcon /></TaskItem>
      <TaskItem><ChatIcon /></TaskItem>
      <TaskItem><FolderIcon /></TaskItem>
      <TaskItem><EdgeIcon /></TaskItem>
      <TaskItem><StoreIcon /></TaskItem>
      <TaskItem $dot><ChromeIcon /></TaskItem>
      <TaskItem $active><AcrobatApp /></TaskItem>
      <TaskItem $dot><DocApp /></TaskItem>
      <Tray>
        <TrayIcon $w={32}><LuChevronUp size={18} color="#333" /></TrayIcon>
        <TrayIcon $w={32}><TrayCloud /></TrayIcon>
        <TrayIcon $w={32}><TrayNet /></TrayIcon>
        <TrayIcon $w={20}><LuVolume2 size={19} color="#333" strokeWidth={1.3} /></TrayIcon>
        <Clock><span>11:30 AM</span><span>7/26/2023</span></Clock>
        <NotifyBadge>3</NotifyBadge>
      </Tray>
    </Taskbar>
  </Shell>
);

export default App;
